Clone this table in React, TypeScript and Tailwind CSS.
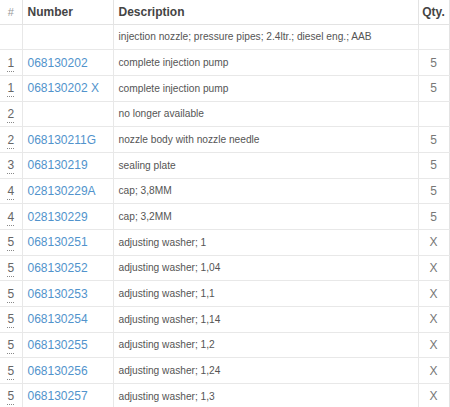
const rows: Array<{ pos: string; number: string; desc: string; qty: string }> = [
  { pos: "", number: "", desc: "injection nozzle; pressure pipes; 2.4ltr.; diesel eng.; AAB", qty: "" },
  { pos: "1", number: "068130202", desc: "complete injection pump", qty: "5" },
  { pos: "1", number: "068130202 X", desc: "complete injection pump", qty: "5" },
  { pos: "2", number: "", desc: "no longer available", qty: "" },
  { pos: "2", number: "068130211G", desc: "nozzle body with nozzle needle", qty: "5" },
  { pos: "3", number: "068130219", desc: "sealing plate", qty: "5" },
  { pos: "4", number: "028130229A", desc: "cap; 3,8MM", qty: "5" },
  { pos: "4", number: "028130229", desc: "cap; 3,2MM", qty: "5" },
  { pos: "5", number: "068130251", desc: "adjusting washer; 1", qty: "X" },
  { pos: "5", number: "068130252", desc: "adjusting washer; 1,04", qty: "X" },
  { pos: "5", number: "068130253", desc: "adjusting washer; 1,1", qty: "X" },
  { pos: "5", number: "068130254", desc: "adjusting washer; 1,14", qty: "X" },
  { pos: "5", number: "068130255", desc: "adjusting washer; 1,2", qty: "X" },
  { pos: "5", number: "068130256", desc: "adjusting washer; 1,24", qty: "X" },
  { pos: "5", number: "068130257", desc: "adjusting washer; 1,3", qty: "X" },
];

export default function App() {
  return (
    <div className="w-[450px] bg-white font-['Liberation_Sans',Arial,sans-serif] text-[#555]">
      <table className="w-[449px] table-fixed border-collapse border-r border-[#e3e3e3]">
        <colgroup>
          <col className="w-[22px]" />
          <col className="w-[91px]" />
          <col className="w-[305px]" />
          <col className="w-[31px]" />
        </colgroup>
        <thead>
          <tr className="h-[24px]">
            <th className="border-b border-r border-[#e3e3e3] p-0 text-center text-[11px] font-normal text-[#999]">#</th>
            <th className="border-b border-r border-[#e3e3e3] pl-[5px] text-left text-[12px] font-bold text-[#444]">Number</th>
            <th className="border-b border-r border-[#e3e3e3] pl-[5px] text-left text-[12px] font-bold text-[#444]">Description</th>
            <th className="border-b border-[#e3e3e3] p-0 text-center text-[12px] font-bold text-[#444]">Qty.</th>
          </tr>
        </thead>
        <tbody>
          {rows.map((row, index) => (
            <tr key={index} className="h-[25.7px]">
              <td className="border-b border-r border-[#e8e8e8] p-0 text-center text-[12px] leading-none text-[#666]">
                {row.pos && (
                  <abbr className="border-b border-dotted border-[#888] pb-[1px] no-underline" title="Position">
                    {row.pos}
                  </abbr>
                )}
              </td>
              <td className="border-b border-r border-[#e8e8e8] pl-[5px] py-0 text-[12px] text-[#5193cc]">
                {row.number}
              </td>
              <td className="border-b border-r border-[#e8e8e8] pl-[5px] py-0 text-[10.2px] text-[#555] whitespace-nowrap">
                {row.desc}
              </td>
              <td className="border-b border-[#e8e8e8] p-0 text-center text-[12px] text-[#777]">{row.qty}</td>
            </tr>
          ))}
        </tbody>
      </table>
    </div>
  );
}
